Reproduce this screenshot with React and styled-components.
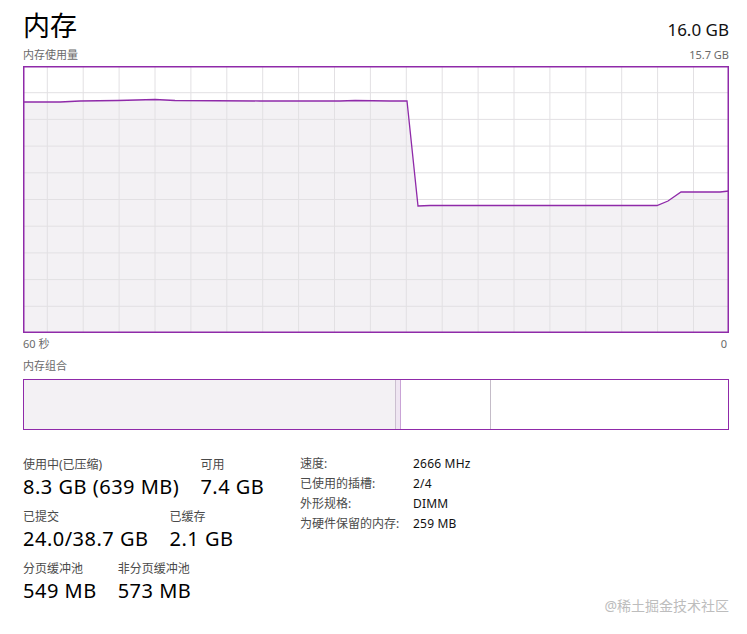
import React from 'react';
import styled, { createGlobalStyle } from 'styled-components';

const GlobalStyle = createGlobalStyle`
  html, body {
    margin: 0;
    padding: 0;
    background: #fff;
  }
  body {
    font-family: "Noto Sans", "Noto Sans CJK SC", sans-serif;
    color: #000;
  }
`;

const PURPLE = '#8f2aa9';
const FILL = '#f3f1f4';
const GRID = '#e2e0e3';

const Page = styled.div`
  position: relative;
  width: 747px;
  height: 634px;
  box-sizing: border-box;
  padding: 8px 18px 0 23px;
  font-family: "Noto Sans", "Noto Sans CJK SC", sans-serif;
`;

const Header = styled.div`
  display: flex;
  justify-content: space-between;
  align-items: flex-end;
  height: 36px;
`;

const Title = styled.h1`
  margin: 0;
  font-size: 27px;
  line-height: 36px;
  font-weight: 400;
  color: #000;
`;

const Total = styled.div`
  font-size: 17px;
  line-height: 24px;
  margin-bottom: 2px;
  color: #111;
`;

const Caption = styled.div`
  display: flex;
  justify-content: space-between;
  font-size: 11px;
  line-height: 16px;
  color: #6a6a6a;
  margin-top: ${p => p.$top || 0}px;
`;

const ChartBox = styled.div`
  margin-top: 3px;
  width: 706px;
  height: 267px;
  svg { display: block; }
`;

const CompBar = styled.div`
  margin-top: 5px;
  width: 706px;
  height: 51px;
  box-sizing: border-box;
  border: 1.5px solid ${PURPLE};
  display: flex;
`;

const Segment = styled.div`
  flex: ${p => (p.$grow ? 1 : 'none')};
  background: ${p => p.$bg || '#fff'};
  border-right: ${p => (p.$edge ? `1px solid ${p.$edge}` : 'none')};
`;

const Stats = styled.div`
  display: flex;
  margin-top: 27px;
`;

const LeftStats = styled.div`
  width: 277px;
  display: flex;
  flex-direction: column;
  gap: 10px;
`;

const StatRow = styled.div`
  display: flex;
  gap: 21px;
`;

const Stat = styled.div`
  display: flex;
  flex-direction: column;
  gap: 2px;
`;

const StatLabel = styled.div`
  font-size: 12px;
  line-height: 16px;
  color: #4a4a4a;
`;

const StatValue = styled.div`
  font-size: 20px;
  line-height: 24px;
  letter-spacing: 0.5px;
  color: #000;
`;

const Details = styled.div`
  display: grid;
  grid-template-columns: 113px auto;
  grid-auto-rows: 20px;
  margin-top: -3px;
  font-size: 12px;
  line-height: 20px;
`;

const DetailKey = styled.div`
  color: #4a4a4a;
`;

const DetailVal = styled.div`
  color: #111;
  letter-spacing: 0.2px;
`;

const Watermark = styled.div`
  position: absolute;
  right: 18px;
  top: 596px;
  font-size: 14px;
  line-height: 20px;
  color: #bdbdbd;
`;

const W = 706;
const H = 267;
const points = [
  [0, 36], [37, 36], [57, 35], [95, 34.5], [132, 33.5], [152, 34.5],
  [237, 35], [317, 35], [332, 34.5], [367, 35], [384, 35],
  [395, 140], [407, 139.5], [634, 139.5], [645, 135], [658, 126],
  [697, 126], [706, 125],
];

function UsageChart() {
  const line = points.map(([x, y]) => `${x},${y}`).join(' ');
  const area = `0,${H} ${line} ${W},${H}`;
  const vLines = Array.from({ length: 19 }, (_, k) => 24.3 + 35.9 * k);
  const hLines = Array.from({ length: 9 }, (_, k) => (H / 10) * (k + 1));
  return (
    <svg width={W} height={H} viewBox={`0 0 ${W} ${H}`}>
      <rect x="0" y="0" width={W} height={H} fill="#fff" />
      <polygon points={area} fill={FILL} />
      {vLines.map(x => (
        <line key={'v' + x} x1={x} y1="0" x2={x} y2={H} stroke={GRID} strokeWidth="1" />
      ))}
      {hLines.map(y => (
        <line key={'h' + y} x1="0" y1={y} x2={W} y2={y} stroke={GRID} strokeWidth="1" />
      ))}
      <polyline points={line} fill="none" stroke={PURPLE} strokeWidth="1.3" />
      <rect x="0.75" y="0.75" width={W - 1.5} height={H - 1.5} fill="none" stroke={PURPLE} strokeWidth="1.5" />
    </svg>
  );
}

export default function App() {
  return (
    <Page>
      <GlobalStyle />
      <Header>
        <Title>内存</Title>
        <Total>16.0 GB</Total>
      </Header>
      <Caption $top={3}>
        <span>内存使用量</span>
        <span>15.7 GB</span>
      </Caption>
      <ChartBox>
        <UsageChart />
      </ChartBox>
      <Caption $top={3}>
        <span>60 秒</span>
        <span style={{ marginRight: 2 }}>0</span>
      </Caption>
      <Caption $top={6}>
        <span>内存组合</span>
      </Caption>
      <CompBar>
        <Segment style={{ width: 371 }} $bg={FILL} $edge="#cbbfd0" />
        <Segment style={{ width: 4 }} $bg="#efe6f2" $edge="#c9a3d6" />
        <Segment style={{ width: 89 }} $bg="#fff" $edge="#c4bcc8" />
        <Segment $grow $bg="#fff" />
      </CompBar>
      <Stats>
        <LeftStats>
          <StatRow>
            <Stat>
              <StatLabel>使用中(已压缩)</StatLabel>
              <StatValue>8.3 GB (639 MB)</StatValue>
            </Stat>
            <Stat>
              <StatLabel>可用</StatLabel>
              <StatValue>7.4 GB</StatValue>
            </Stat>
          </StatRow>
          <StatRow>
            <Stat>
              <StatLabel>已提交</StatLabel>
              <StatValue>24.0/38.7 GB</StatValue>
            </Stat>
            <Stat>
              <StatLabel>已缓存</StatLabel>
              <StatValue>2.1 GB</StatValue>
            </Stat>
          </StatRow>
          <StatRow>
            <Stat>
              <StatLabel>分页缓冲池</StatLabel>
              <StatValue>549 MB</StatValue>
            </Stat>
            <Stat>
              <StatLabel>非分页缓冲池</StatLabel>
              <StatValue>573 MB</StatValue>
            </Stat>
          </StatRow>
        </LeftStats>
        <Details>
          <DetailKey>速度:</DetailKey>
          <DetailVal>2666 MHz</DetailVal>
          <DetailKey>已使用的插槽:</DetailKey>
          <DetailVal>2/4</DetailVal>
          <DetailKey>外形规格:</DetailKey>
          <DetailVal>DIMM</DetailVal>
          <DetailKey>为硬件保留的内存:</DetailKey>
          <DetailVal>259 MB</DetailVal>
        </Details>
      </Stats>
      <Watermark>@稀土掘金技术社区</Watermark>
    </Page>
  );
}
